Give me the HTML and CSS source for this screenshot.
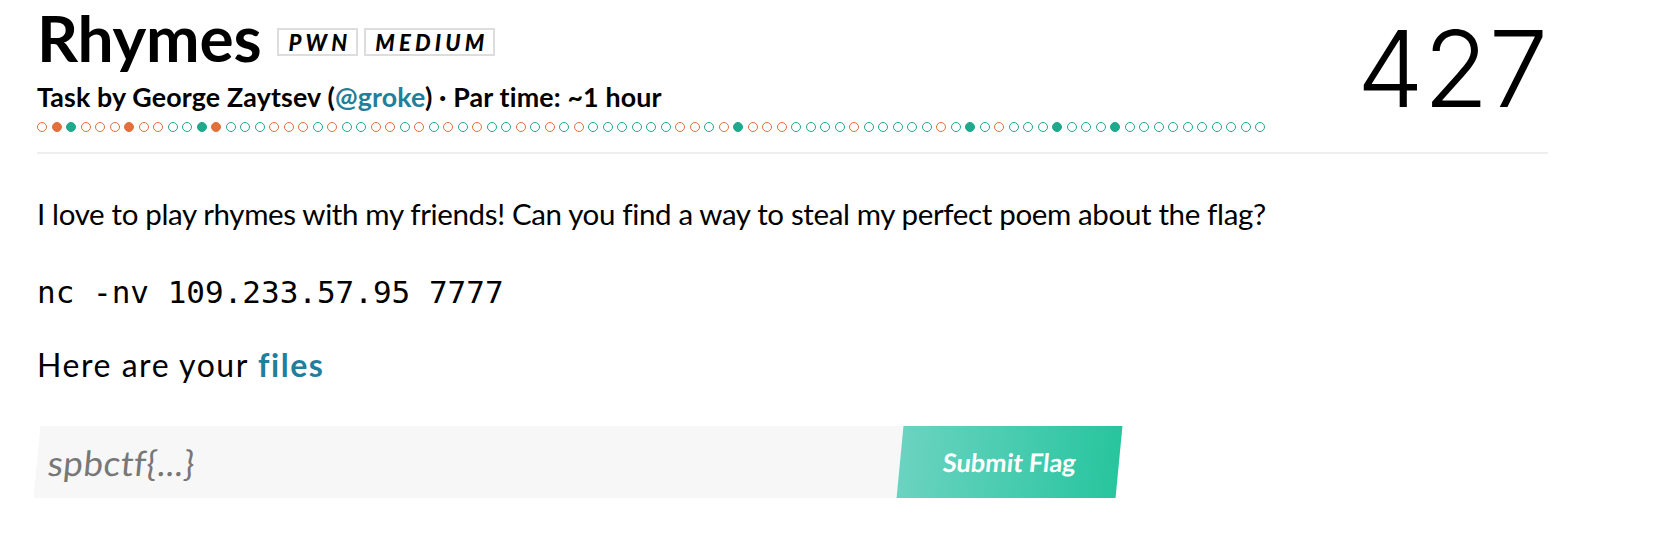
FILE: index.html
```html
<!DOCTYPE html>
<html>
<head>
<meta charset="utf-8">
<link rel="stylesheet" href="styles.css">
</head>
<body>
<div class="page">
  <header class="head">
    <div class="head-main">
      <div class="title-row">
        <h1 class="title">Rhymes</h1>
        <span class="tag">PWN</span>
        <span class="tag">MEDIUM</span>
      </div>
      <div class="sub">Task by George Zaytsev (<a class="lnk">@groke</a>) · Par time: ~1 hour</div>
      <div class="dots">
        <i class="d o"></i><i class="d of"></i><i class="d tf"></i><i class="d o"></i><i class="d o"></i><i class="d o"></i><i class="d of"></i><i class="d o"></i><i class="d o"></i><i class="d t"></i>
        <i class="d t"></i><i class="d tf"></i><i class="d of"></i><i class="d t"></i><i class="d t"></i><i class="d t"></i><i class="d o"></i><i class="d o"></i><i class="d o"></i><i class="d t"></i>
        <i class="d o"></i><i class="d t"></i><i class="d t"></i><i class="d o"></i><i class="d o"></i><i class="d t"></i><i class="d o"></i><i class="d t"></i><i class="d o"></i><i class="d t"></i>
        <i class="d o"></i><i class="d t"></i><i class="d t"></i><i class="d o"></i><i class="d t"></i><i class="d o"></i><i class="d t"></i><i class="d o"></i><i class="d t"></i><i class="d t"></i>
        <i class="d t"></i><i class="d t"></i><i class="d t"></i><i class="d t"></i><i class="d o"></i><i class="d o"></i><i class="d t"></i><i class="d o"></i><i class="d tf"></i><i class="d o"></i>
        <i class="d o"></i><i class="d o"></i><i class="d t"></i><i class="d t"></i><i class="d t"></i><i class="d t"></i><i class="d o"></i><i class="d t"></i><i class="d t"></i><i class="d t"></i>
        <i class="d t"></i><i class="d t"></i><i class="d o"></i><i class="d t"></i><i class="d tf"></i><i class="d t"></i><i class="d o"></i><i class="d t"></i><i class="d t"></i><i class="d t"></i>
        <i class="d tf"></i><i class="d t"></i><i class="d t"></i><i class="d t"></i><i class="d tf"></i><i class="d t"></i><i class="d t"></i><i class="d t"></i><i class="d t"></i><i class="d t"></i>
        <i class="d t"></i><i class="d t"></i><i class="d t"></i><i class="d t"></i><i class="d t"></i>
      </div>
    </div>
    <div class="score">427</div>
  </header>
  <section class="desc">
    <p class="txt intro">I love to play rhymes with my friends! Can you find a way to steal my perfect poem about the flag?</p>
    <p class="code">nc -nv 109.233.57.95 7777</p>
    <p class="txt files-line">Here are your <a class="lnk files">files</a></p>
  </section>
  <form class="flag">
    <input class="flag-input" type="text" placeholder="spbctf{...}">
    <button class="flag-btn" type="button">Submit Flag</button>
  </form>
</div>
</body>
</html>
```

FILE: styles.css
```css
* { box-sizing: border-box; }
body {
  margin: 0;
  background: #fff;
  color: #000;
  font-family: Lato, "Open Sans", sans-serif;
}
.page {
  width: 1548px;
  padding-left: 37px;
}
.head {
  display: flex;
  justify-content: space-between;
  align-items: flex-start;
  border-bottom: 2px solid #eeeeee;
  padding-bottom: 20px;
}
.title-row {
  display: flex;
  align-items: flex-start;
  margin-top: 7px;
  height: 62px;
}
.title {
  margin: 0;
  font-size: 64px;
  line-height: 62px;
  font-weight: 700;
  letter-spacing: -0.2px;
}
.tag {
  margin-left: 16px;
  margin-top: 21px;
  border: 2px solid #dddddd;
  height: 28px;
  padding: 0 5px 0 9px;
  display: flex;
  align-items: center;
  font-size: 22px;
  font-weight: 900;
  font-style: italic;
  letter-spacing: 4.2px;
}
.tag + .tag { margin-left: 6px; }
.sub {
  margin-top: 13px;
  font-size: 26.8px;
  line-height: 30px;
  font-weight: 700;
  letter-spacing: 0.15px;
}
.lnk { color: #1f7f9c; text-decoration: none; }
.dots {
  display: flex;
  gap: 4.5px;
  margin-top: 10px;
}
.d {
  display: block;
  width: 10px;
  height: 10px;
  border-radius: 50%;
  border: 1.5px solid;
}
.o { border-color: #e2703a; }
.t { border-color: #1fa88c; }
.of { border-color: #e2703a; background: #e2703a; }
.tf { border-color: #1fa88c; background: #1fa88c; }
.score {
  font-family: Inter, sans-serif;
  font-weight: 300;
  font-size: 106px;
  line-height: 107px;
  margin-top: 15px;
}
.desc p { margin: 0; }
.txt {
  font-size: 30px;
  line-height: 36px;
}
.intro {
  margin-top: 42px !important;
  font-size: 29.5px;
  letter-spacing: -0.36px;
}
.code {
  font-family: "DejaVu Sans Mono", monospace;
  font-size: 31px;
  line-height: 36px;
  margin-top: 42px !important;
  margin-bottom: 37px !important;
}
.files-line {
  font-size: 32px;
  letter-spacing: 1.55px;
}
.files { font-weight: 700; }
.flag {
  display: flex;
  margin-top: 43px;
  transform: skewX(-5.5deg);
  height: 72px;
}
.flag-input {
  width: 863px;
  height: 72px;
  border: none;
  background: #f7f7f7;
  padding: 0 11px;
  font-family: Lato, sans-serif;
  font-size: 35px;
  letter-spacing: 0.5px;
  color: #333;
  outline: none;
}
.flag-input::placeholder { color: #777; }
.flag-btn {
  width: 219px;
  height: 72px;
  border: none;
  background: linear-gradient(90deg, #6bd3c1, #27c59e);
  color: #fff;
  font-family: Lato, sans-serif;
  font-weight: 700;
  font-size: 25.5px;
  padding: 0;
}
```
